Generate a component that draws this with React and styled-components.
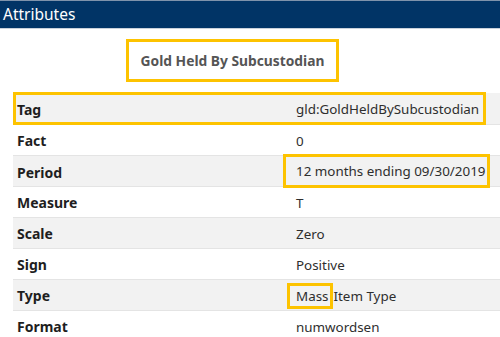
import React from "react";
import styled, { createGlobalStyle } from "styled-components";

const Global = createGlobalStyle`
  html, body { margin: 0; padding: 0; background: #ffffff; }
  body { font-family: "Noto Sans", "Open Sans", sans-serif; width: 500px; height: 337px; overflow: hidden; }
`;

const Header = styled.header`
  height: 27px;
  background: #013466;
  border-top: 1px solid #7f93ab;
  border-bottom: 1px solid #c9d1db;
  color: #ffffff;
  font-size: 15.5px;
  line-height: 27px;
  padding-left: 3px;
`;

const TitleWrap = styled.div`
  width: 465px;
  display: flex;
  justify-content: center;
  padding-top: 10px;
  height: 55px;
  box-sizing: border-box;
`;

const TitleBox = styled.div`
  width: 213px;
  height: 43px;
  box-sizing: border-box;
  border: 3px solid #fdc300;
  display: flex;
  align-items: center;
  justify-content: center;
  font-weight: 700;
  font-size: 13.8px;
  color: #555555;
`;

const Table = styled.div`
  margin-left: 13px;
  margin-top: 9px;
`;

const Row = styled.div`
  position: relative;
  display: grid;
  grid-template-columns: 270px 1fr;
  align-items: stretch;
  height: 31px;
  box-sizing: border-box;
  border-top: ${p => (p.$first ? "none" : "1px solid #e4e4e4")};
  background: ${p => (p.$striped ? "#f2f2f2" : "#ffffff")};
`;

const RowOutline = styled.div`
  position: absolute;
  left: 0;
  right: 14px;
  top: -1px;
  bottom: -1px;
  border: 3px solid #fdc300;
  pointer-events: none;
  z-index: 2;
`;

const Label = styled.div`
  display: flex;
  align-items: center;
  padding-left: 4px;
  padding-top: 1px;
  font-weight: 700;
  font-size: 14px;
  color: #1e1e1e;
`;

const Value = styled.div`
  display: flex;
  align-items: center;
  padding-left: 13px;
  padding-top: 1px;
  font-size: 13.4px;
  color: #2e2e2e;
  white-space: nowrap;
`;

const Mark = styled.span`
  position: relative;
  z-index: 2;
  display: inline-flex;
  align-items: center;
  flex: none;
  box-sizing: border-box;
  border: 3px solid #fdc300;
  height: ${p => p.$h}px;
  margin-top: ${p => p.$mt || 0}px;
  margin-left: ${p => -p.$pl - 3}px;
  padding-left: ${p => p.$pl}px;
  padding-right: ${p => p.$pr}px;
`;

const After = styled.span`
  margin-left: 1px;
`;

const rows = [
  { label: "Tag", value: "gld:GoldHeldBySubcustodian", outline: true },
  { label: "Fact", value: "0" },
  { label: "Period", value: <Mark $h={34} $mt={-3} $pl={10} $pr={2}>12 months ending 09/30/2019</Mark> },
  { label: "Measure", value: "T" },
  { label: "Scale", value: "Zero" },
  { label: "Sign", value: "Positive" },
  { label: "Type", value: <><Mark $h={26} $pl={6} $pr={1}>Mass</Mark><After>Item Type</After></> },
  { label: "Format", value: "numwordsen" },
];

export default function App() {
  return (
    <>
      <Global />
      <Header>Attributes</Header>
      <TitleWrap>
        <TitleBox>Gold Held By Subcustodian</TitleBox>
      </TitleWrap>
      <Table>
        {rows.map((r, i) => (
          <Row key={r.label} $striped={i % 2 === 0} $first={i === 0}>
            {r.outline && <RowOutline />}
            <Label>{r.label}</Label>
            <Value>{r.value}</Value>
          </Row>
        ))}
      </Table>
    </>
  );
}
